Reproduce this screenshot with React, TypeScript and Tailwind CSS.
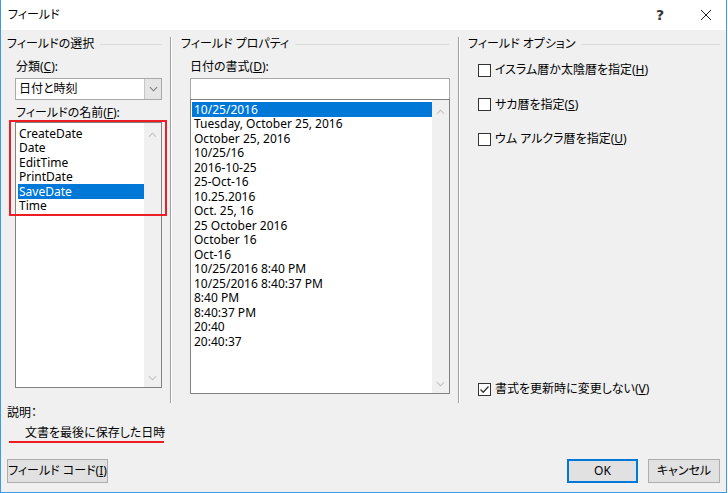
import React from 'react'

const FORMATS = [
  '10/25/2016',
  'Tuesday, October 25, 2016',
  'October 25, 2016',
  '10/25/16',
  '2016-10-25',
  '25-Oct-16',
  '10.25.2016',
  'Oct. 25, 16',
  '25 October 2016',
  'October 16',
  'Oct-16',
  '10/25/2016 8:40 PM',
  '10/25/2016 8:40:37 PM',
  '8:40 PM',
  '8:40:37 PM',
  '20:40',
  '20:40:37',
]

const FIELDS = ['CreateDate', 'Date', 'EditTime', 'PrintDate', 'SaveDate', 'Time']

const Chevron = ({ up = false, className = '' }: { up?: boolean; className?: string }) => (
  <svg viewBox="0 0 10 6" className={`w-[9px] h-[6px] ${className}`} fill="none" stroke="currentColor" strokeWidth="1.2">
    <polyline points={up ? '1 5 5 1 9 5' : '1 1 5 5 9 1'} />
  </svg>
)

const GroupLabel = ({ text, pl, pr }: { text: string; pl: string; pr: string }) => (
  <div className={`flex items-center h-4 gap-[6px] ${pl} ${pr}`}>
    <span className="whitespace-nowrap">{text}</span>
    <div className="flex-1 h-px bg-[#dcdcdc]" />
  </div>
)

const Separator = () => (
  <div className="w-[2px] h-[366px] mt-[7px] border-l border-[#a0a0a0] border-r border-r-white shrink-0" />
)

const ScrollStrip = () => (
  <div className="w-[17px] shrink-0 bg-[#f0f0f0] flex flex-col items-center justify-between pt-[9px] pb-[6px] text-[#c2c2c2]">
    <Chevron up />
    <Chevron />
  </div>
)

const CheckBox = ({ checked = false }: { checked?: boolean }) => (
  <span className="w-[13px] h-[13px] border border-[#333] bg-white shrink-0 flex items-center justify-center">
    {checked && (
      <svg viewBox="0 0 11 11" className="w-[11px] h-[11px]" fill="none" stroke="#333" strokeWidth="1.3">
        <polyline points="1.5 5.5 4.2 8.2 9.5 2.5" />
      </svg>
    )}
  </span>
)

export default function App() {
  return (
    <div className="w-[727px] h-[493px] border-x border-b border-[#3c9be6] bg-[#f0f0f0] flex flex-col text-[12px] text-black font-['Noto_Sans','Noto_Sans_CJK_JP',sans-serif] [font-feature-settings:'palt'] leading-4 select-none">
      {/* title bar */}
      <div className="h-[30px] bg-white flex items-center pl-[7px] shrink-0">
        <span className="text-[12px]">フィールド</span>
        <div className="flex-1" />
        <span className="text-[14px] font-bold text-[#333] mr-[37px] font-['DejaVu_Sans',sans-serif]">?</span>
        <svg viewBox="0 0 10 10" className="w-[10px] h-[10px] mr-[15px]" stroke="#222" strokeWidth="1">
          <line x1="0" y1="0" x2="10" y2="10" />
          <line x1="10" y1="0" x2="0" y2="10" />
        </svg>
      </div>

      {/* body */}
      <div className="flex h-[373px] shrink-0">
        {/* left */}
        <div className="w-[169px] shrink-0 relative pt-[6px]">
          <GroupLabel text="フィールドの選択" pl="pl-[6px]" pr="pr-[8px]" />
          <div className="pl-[15px] mt-[7px] h-4">
            分類(<span className="underline">C</span>):
          </div>
          <div className="ml-[14px] mt-[3px] w-[147px] h-[22px] border border-[#a9a9a9] bg-white flex">
            <span className="flex-1 pl-[3px] leading-5">日付と時刻</span>
            <div className="w-[17px] bg-[#e5e5e5] border-l border-[#c6c6c6] flex items-center justify-center text-[#7a7a7a]">
              <Chevron />
            </div>
          </div>
          <div className="pl-[15px] mt-[5px] h-4">
            フィールドの名前(<span className="underline">F</span>):
          </div>
          <div className="ml-[14px] mt-px w-[147px] h-[266px] border border-[#828282] bg-white flex">
            <div className="flex-1 pt-[3px] pl-[2px]">
              {FIELDS.map((f) => (
                <div
                  key={f}
                  className={`h-[14.5px] flex items-center leading-[13px] pl-px ${f === 'SaveDate' ? 'bg-[#0078d7] text-white' : ''}`}
                >
                  {f}
                </div>
              ))}
            </div>
            <ScrollStrip />
          </div>
          {/* red annotation */}
          <div className="absolute left-[8px] top-[90px] w-[158px] h-[96px] border-2 border-[#ee1c25]" />
        </div>

        <Separator />

        {/* middle */}
        <div className="w-[286px] shrink-0 pt-[6px]">
          <GroupLabel text="フィールド プロパティ" pl="pl-[9px]" pr="pr-[9px]" />
          <div className="pl-[18px] mt-[7px] h-4">
            日付の書式(<span className="underline">D</span>):
          </div>
          <div className="ml-[18px] mt-[3px] w-[260px] h-[22px] border border-[#a9a9a9] bg-white" />
          <div className="ml-[18px] -mt-px w-[260px] h-[295px] border border-[#828282] bg-white flex">
            <div className="flex-1 pt-[2px] pl-px">
              {FORMATS.map((f, i) => (
                <div
                  key={f}
                  className={`h-[14.5px] flex items-center leading-[13px] pl-[2px] whitespace-nowrap ${i === 0 ? 'bg-[#0078d7] text-white' : ''}`}
                >
                  {f}
                </div>
              ))}
            </div>
            <ScrollStrip />
          </div>
        </div>

        <Separator />

        {/* right */}
        <div className="flex-1 pt-[6px] flex flex-col">
          <GroupLabel text="フィールド オプション" pl="pl-[8px]" pr="pr-[6px]" />
          <div className="pl-[18px] mt-[10px] flex flex-col gap-[18.5px]">
            <label className="flex items-center gap-[4px] h-4">
              <CheckBox />
              <span>イスラム暦か太陰暦を指定(<span className="underline">H</span>)</span>
            </label>
            <label className="flex items-center gap-[4px] h-4">
              <CheckBox />
              <span>サカ暦を指定(<span className="underline">S</span>)</span>
            </label>
            <label className="flex items-center gap-[4px] h-4">
              <CheckBox />
              <span>ウム アルクラ暦を指定(<span className="underline">U</span>)</span>
            </label>
          </div>
          <div className="flex-1" />
          <label className="pl-[18px] mb-[6px] flex items-center gap-[4px] h-4">
            <CheckBox checked />
            <span>書式を更新時に変更しない(<span className="underline">V</span>)</span>
          </label>
        </div>
      </div>

      {/* footer */}
      <div className="flex-1 flex flex-col pt-[2px]">
        <div className="pl-[6px] h-4">説明：</div>
        <div className="pl-[24px] mt-[4px] h-4">文書を最後に保存した日時</div>
        <div className="ml-[8px] w-[155px] h-[2px] bg-[#ee1c25]" />
        <div className="mt-[16px] flex items-center px-[6px]">
          <button className="w-[101px] h-[24px] border border-[#adadad] bg-[#e1e1e1] text-[12px] whitespace-nowrap">
            フィールド コード(<span className="underline">I</span>)
          </button>
          <div className="flex-1" />
          <button className="w-[71px] h-[24px] border-2 border-[#0078d7] bg-[#e1e1e1] text-[12px] mr-[10px]">
            OK
          </button>
          <button className="w-[72px] h-[24px] border border-[#adadad] bg-[#e1e1e1] text-[12px]">
            キャンセル
          </button>
        </div>
      </div>
    </div>
  )
}
